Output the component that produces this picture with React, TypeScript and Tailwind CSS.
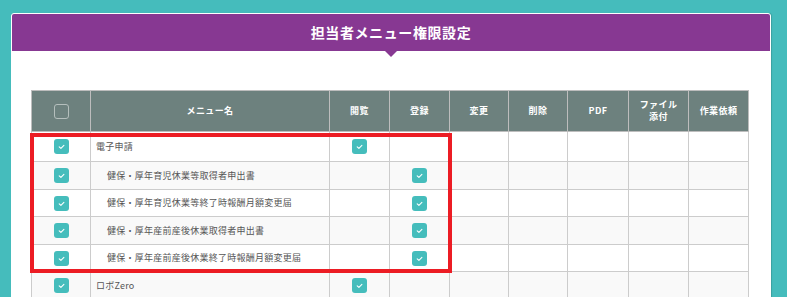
import { Fragment } from 'react'

interface Row {
  name: string
  child?: boolean
  view?: boolean
  register?: boolean
  h: number
}

const rows: Row[] = [
  { name: '電子申請', view: true, h: 30 },
  { name: '健保・厚年育児休業等取得者申出書', child: true, register: true, h: 28 },
  { name: '健保・厚年育児休業等終了時報酬月額変更届', child: true, register: true, h: 27 },
  { name: '健保・厚年産前産後休業取得者申出書', child: true, register: true, h: 28 },
  { name: '健保・厚年産前産後休業終了時報酬月額変更届', child: true, register: true, h: 27 },
  { name: 'ロボZero', view: true, h: 28 },
  { name: '', h: 28 },
]

const widths = [59, 239, 60, 60, 59, 59, 61, 60, 60]

function Check({ on }: { on?: boolean }) {
  if (!on) return null
  return (
    <span className="mx-auto flex h-[15px] w-[15px] items-center justify-center rounded-[3px] bg-[#45bdbc]">
      <svg width="9" height="9" viewBox="0 0 9 9" fill="none" stroke="white" strokeWidth={1.1} strokeLinecap="round" strokeLinejoin="round">
        <path d="M2.2 4.8 3.9 6.3 6.9 3.3" />
      </svg>
    </span>
  )
}

export default function App() {
  const cell = 'border border-[#cccccc] p-0'
  const th = 'border border-[#bdbdbd] p-0'
  return (
    <div
      className="h-[297px] overflow-hidden bg-[#45bcbc] pl-[11px] pr-[16px] pt-[13px]"
      style={{ fontFamily: '"Noto Sans CJK JP", "Noto Sans", sans-serif' }}
    >
      <div className="relative h-[400px] rounded-t-[3px] border border-white bg-white shadow-[1px_0_1px_rgba(0,0,0,0.15)]">
        <div className="relative flex h-[37px] items-center justify-center rounded-t-[2px] bg-[#873892]">
          <h1 className="text-[14px] font-bold tracking-[0.6px] text-white">担当者メニュー権限設定</h1>
          <span className="absolute left-1/2 top-full h-0 w-0 -translate-x-1/2 border-x-[6px] border-t-[6px] border-x-transparent border-t-[#873892]" />
        </div>

        <div className="relative pl-[19px] pt-[39px]">
          <table className="table-fixed border-collapse" style={{ width: 717 }}>
            <colgroup>
              {widths.map((w, i) => (
                <col key={i} style={{ width: w }} />
              ))}
            </colgroup>
            <thead>
              <tr className="h-[41px] bg-[#6d817e] text-[9px] font-bold leading-[12px] tracking-[0.4px] whitespace-nowrap text-white">
                <th className={th}>
                  <span className="mx-auto block h-[15px] w-[15px] rounded-[3px] border border-[#b5bfbd]" />
                </th>
                <th className={th}>メニュー名</th>
                <th className={th}>閲覧</th>
                <th className={th}>登録</th>
                <th className={th}>変更</th>
                <th className={th}>削除</th>
                <th className={th}>PDF</th>
                <th className={th}>
                  ファイル
                  <br />
                  添付
                </th>
                <th className={th}>作業依頼</th>
              </tr>
            </thead>
            <tbody className="text-[9px] tracking-[0.25px] whitespace-nowrap text-[#555555]">
              {rows.map((r, i) => (
                <tr key={i} className={i % 2 === 1 ? 'bg-[#f9f9f9]' : 'bg-white'} style={{ height: r.h }}>
                  <td className={cell}>
                    <Check on={r.name !== ''} />
                  </td>
                  <td className={`${cell} ${r.child ? 'pl-[16px]' : 'pl-[5px]'} align-middle`}>{r.name}</td>
                  <td className={cell}>
                    <Check on={r.view} />
                  </td>
                  <td className={cell}>
                    <Check on={r.register} />
                  </td>
                  {[0, 1, 2, 3, 4].map((k) => (
                    <Fragment key={k}>
                      <td className={cell} />
                    </Fragment>
                  ))}
                </tr>
              ))}
            </tbody>
          </table>

          <div className="pointer-events-none absolute left-[18px] top-[82px] h-[140px] w-[422px] border-[4px] border-[#ec1c24]" />
        </div>
      </div>
    </div>
  )
}
